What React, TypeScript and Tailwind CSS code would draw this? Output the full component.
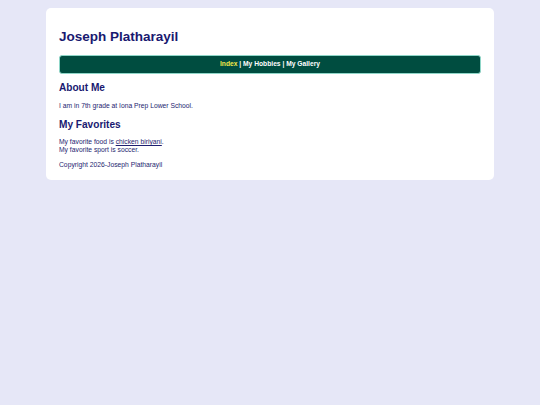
import React from 'react';

export default function App() {
  return (
    <div className="min-h-[405px] w-full bg-[#e6e7f7] pt-[8px] font-['Liberation_Sans',Arial,sans-serif] text-[#1e1e70]">
      <div className="mx-auto w-[448px] rounded-[5px] bg-white px-[13px] pt-[21px] pb-[11px]">
        <h1 className="text-[13.5px] font-bold leading-[16px] text-[#191970]">Joseph Platharayil</h1>

        <nav className="mt-[10px] flex h-[19px] items-center justify-center rounded-[3px] border border-[#8fd6c8] bg-[#004d40] text-[6.7px] font-bold text-white">
          <span className="text-[#f0e84a]">Index</span>
          <span className="whitespace-pre"> | </span>
          <span>My Hobbies</span>
          <span className="whitespace-pre"> | </span>
          <span>My Gallery</span>
        </nav>

        <h2 className="mt-[8px] text-[10.1px] font-bold leading-[12px] text-[#191970]">About Me</h2>
        <p className="mt-[8px] text-[6.75px] leading-[8px]">I am in 7th grade at Iona Prep Lower School.</p>

        <h2 className="mt-[8.5px] text-[10.1px] font-bold leading-[12px] text-[#191970]">My Favorites</h2>
        <p className="mt-[7.5px] text-[6.75px] leading-[8px]">
          My favorite food is <span className="underline">chicken biriyani</span>.
          <br />
          My favorite sport is soccer.
        </p>

        <p className="mt-[6.5px] text-[6.75px] leading-[8px]">Copyright 2026-Joseph Platharayil</p>
      </div>
    </div>
  );
}
